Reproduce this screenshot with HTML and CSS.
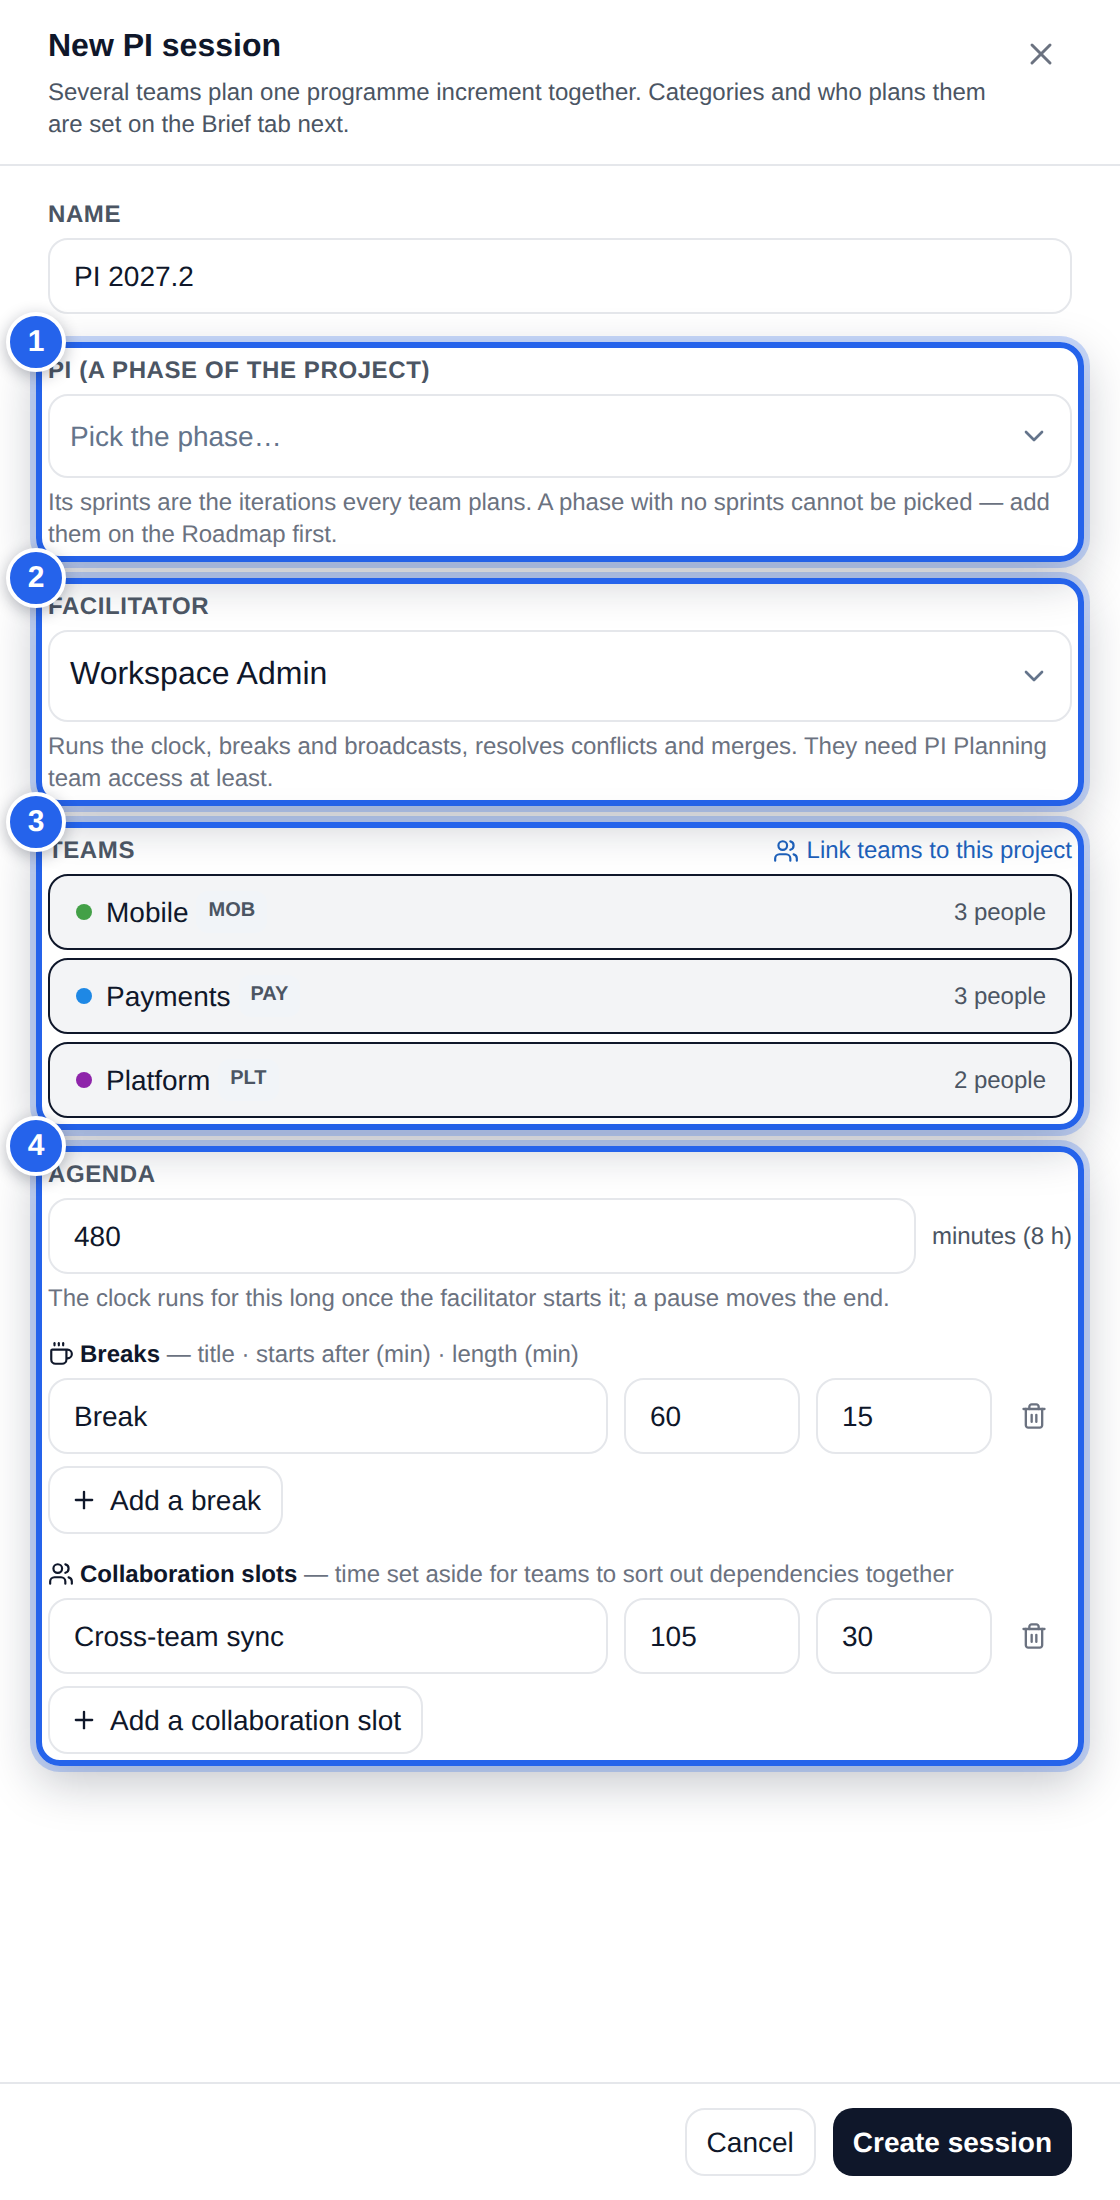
FILE: index.html
```html
<!DOCTYPE html>
<html lang="en">
<head>
<meta charset="utf-8">
<title>New PI session</title>
<link rel="stylesheet" href="styles.css">
</head>
<body>
<div class="modal">
  <header class="head">
    <div class="head-text">
      <h1 class="title">New PI session</h1>
      <p class="sub">Several teams plan one programme increment together. Categories and who plans them are set on the Brief tab next.</p>
    </div>
    <button class="close" aria-label="Close">
      <svg class="ic36" viewBox="0 0 24 24"><path d="M18 6 6 18"/><path d="m6 6 12 12"/></svg>
    </button>
  </header>

  <main class="body">
    <div class="field">
      <label class="label">Name</label>
      <input class="input" value="PI 2027.2">
    </div>

    <section class="spot">
      <span class="num">1</span>
      <label class="label">PI (a phase of the project)</label>
      <div class="select sm"><span class="placeholder">Pick the phase…</span>
        <svg class="ic32 chev" viewBox="0 0 24 24"><path d="m6 9 6 6 6-6"/></svg></div>
      <p class="hint">Its sprints are the iterations every team plans. A phase with no sprints cannot be picked — add them on the Roadmap first.</p>
    </section>

    <section class="spot">
      <span class="num">2</span>
      <label class="label">Facilitator</label>
      <div class="select lg"><span class="select-value">Workspace Admin</span>
        <svg class="ic32 chev" viewBox="0 0 24 24"><path d="m6 9 6 6 6-6"/></svg></div>
      <p class="hint">Runs the clock, breaks and broadcasts, resolves conflicts and merges. They need PI Planning team access at least.</p>
    </section>

    <section class="spot">
      <span class="num">3</span>
      <div class="label-row">
        <label class="label">Teams</label>
        <a class="link">
          <svg class="ic26" viewBox="0 0 24 24"><path d="M16 21v-2a4 4 0 0 0-4-4H6a4 4 0 0 0-4 4v2"/><circle cx="9" cy="7" r="4"/><path d="M22 21v-2a4 4 0 0 0-3-3.87"/><path d="M16 3.13a4 4 0 0 1 0 7.75"/></svg>
          Link teams to this project</a>
      </div>
      <div class="teams">
        <div class="team"><i class="dot green"></i><span class="team-name">Mobile</span><span class="code">MOB</span><span class="people">3 people</span></div>
        <div class="team"><i class="dot blue"></i><span class="team-name">Payments</span><span class="code">PAY</span><span class="people">3 people</span></div>
        <div class="team"><i class="dot purple"></i><span class="team-name">Platform</span><span class="code">PLT</span><span class="people">2 people</span></div>
      </div>
    </section>

    <section class="spot">
      <span class="num">4</span>
      <label class="label">Agenda</label>
      <div class="agenda-row">
        <input class="input grow" value="480">
        <span class="unit">minutes (8 h)</span>
      </div>
      <p class="hint">The clock runs for this long once the facilitator starts it; a pause moves the end.</p>

      <div class="sub-label">
        <svg class="ic26 dark" viewBox="0 0 24 24"><path d="M10 2v2"/><path d="M14 2v2"/><path d="M16 8a1 1 0 0 1 1 1v8a4 4 0 0 1-4 4H7a4 4 0 0 1-4-4V9a1 1 0 0 1 1-1h14a4 4 0 1 1 0 8h-1"/><path d="M6 2v2"/></svg>
        <span><b>Breaks</b> — title · starts after (min) · length (min)</span>
      </div>
      <div class="slot">
        <input class="input" value="Break"><input class="input" value="60"><input class="input" value="15">
        <button class="trash" aria-label="Remove"><svg class="ic28" viewBox="0 0 24 24"><path d="M3 6h18"/><path d="M19 6v14c0 1-1 2-2 2H7c-1 0-2-1-2-2V6"/><path d="M8 6V4c0-1 1-2 2-2h4c1 0 2 1 2 2v2"/><line x1="10" x2="10" y1="11" y2="17"/><line x1="14" x2="14" y1="11" y2="17"/></svg></button>
      </div>
      <button class="btn add"><svg class="ic28" viewBox="0 0 24 24"><path d="M5 12h14"/><path d="M12 5v14"/></svg><span>Add a break</span></button>

      <div class="sub-label">
        <svg class="ic26 dark" viewBox="0 0 24 24"><path d="M16 21v-2a4 4 0 0 0-4-4H6a4 4 0 0 0-4 4v2"/><circle cx="9" cy="7" r="4"/><path d="M22 21v-2a4 4 0 0 0-3-3.87"/><path d="M16 3.13a4 4 0 0 1 0 7.75"/></svg>
        <span><b>Collaboration slots</b> — time set aside for teams to sort out dependencies together</span>
      </div>
      <div class="slot">
        <input class="input" value="Cross-team sync"><input class="input" value="105"><input class="input" value="30">
        <button class="trash" aria-label="Remove"><svg class="ic28" viewBox="0 0 24 24"><path d="M3 6h18"/><path d="M19 6v14c0 1-1 2-2 2H7c-1 0-2-1-2-2V6"/><path d="M8 6V4c0-1 1-2 2-2h4c1 0 2 1 2 2v2"/><line x1="10" x2="10" y1="11" y2="17"/><line x1="14" x2="14" y1="11" y2="17"/></svg></button>
      </div>
      <button class="btn add"><svg class="ic28" viewBox="0 0 24 24"><path d="M5 12h14"/><path d="M12 5v14"/></svg><span>Add a collaboration slot</span></button>
    </section>
  </main>

  <footer class="foot">
    <button class="btn cancel">Cancel</button>
    <button class="btn primary">Create session</button>
  </footer>
</div>
</body>
</html>
```
FILE: styles.css
```css
* { box-sizing: border-box; }
html, body { margin: 0; padding: 0; background: #fff; }
body {
  font-family: "Liberation Sans", Arial, sans-serif;
  color: #0f172a;
  text-rendering: geometricPrecision;
}
svg { fill: none; stroke: currentColor; stroke-linecap: round; stroke-linejoin: round; stroke-width: 2; flex: none; display: block; }
.ic36 { width: 36px; height: 36px; }
.ic32 { width: 32px; height: 32px; }
.ic28 { width: 28px; height: 28px; }
.ic26 { width: 26px; height: 26px; }
.dark { color: #0f172a; }

.modal { width: 1120px; height: 2200px; display: flex; flex-direction: column; overflow: hidden; }

.head { display: flex; align-items: flex-start; justify-content: space-between; padding: 25px 48px 0; border-bottom: 2px solid #e5e7eb; height: 166px; }
.head-text { width: 960px; }
.title { margin: 0 0 12px; font-size: 32px; line-height: 40px; font-weight: 700; }
.sub { margin: 0; font-size: 24px; line-height: 32px; color: #4b5563; }
.close { border: 0; background: none; padding: 0; color: #6b7280; margin: 11px 13px 0 0; }

.body { flex: 1; padding: 32px 48px; display: flex; flex-direction: column; gap: 40px; }

.label { display: block; font-size: 24px; line-height: 31px; padding-top: 1px; font-weight: 700; text-transform: uppercase; letter-spacing: .6px; color: #4b5563; margin-bottom: 8px; }
.input { display: block; width: 100%; height: 76px; padding: 2px 24px 0; border: 2px solid #e5e7eb; border-radius: 20px; background: #fff; font: 28px "Liberation Sans", Arial, sans-serif; color: #0f172a; outline: 0; text-rendering: geometricPrecision; }

.spot { position: relative; }
.spot::after { content: ""; position: absolute; inset: -12px; border: 6px solid #2563eb; border-radius: 24px; box-shadow: 0 0 0 6px rgba(37, 99, 235, .25), 0 16px 48px rgba(15, 23, 42, .25); pointer-events: none; }
.num { position: absolute; left: -42px; top: -42px; z-index: 2; width: 60px; height: 60px; border-radius: 50%; background: #2563eb; border: 4px solid #fff; color: #fff; font-size: 30px; font-weight: 700; display: flex; align-items: center; justify-content: center; box-shadow: 0 4px 16px rgba(15, 23, 42, .3); }

.select { display: flex; align-items: center; justify-content: space-between; border: 2px solid #e5e7eb; border-radius: 20px; padding: 0 20px; background: #fff; }
.select.sm { height: 84px; font-size: 28px; }
.select.lg { height: 92px; font-size: 32px; }
.placeholder { color: #64748b; padding-top: 2px; }
.select-value { padding-bottom: 6px; }
.chev { color: #64748b; }
.hint { margin: 9px 0 -1px; font-size: 24px; line-height: 32px; color: #6b7280; }

.label-row { display: flex; justify-content: space-between; align-items: flex-start; }
.link { display: flex; align-items: center; gap: 8px; height: 32px; padding-top: 2px; font-size: 24px; color: #1d5fb8; }
.teams { display: flex; flex-direction: column; gap: 8px; }
.team { display: flex; align-items: center; height: 76px; padding: 0 24px 0 26px; background: #f3f4f6; border: 2px solid #0f172a; border-radius: 20px; font-size: 28px; }
.dot { width: 16px; height: 16px; border-radius: 50%; margin-right: 14px; }
.green { background: #43a047; }
.blue { background: #1e88e5; }
.purple { background: #8e24aa; }
.team-name { padding-top: 2px; }
.code { margin-left: 8px; padding: 0 12px 4px; font-size: 20px; font-weight: 700; line-height: 38px; color: #4b5563; background: #f1f4f8; border-radius: 12px; }
.people { margin-left: auto; padding-top: 2px; font-size: 24px; color: #4b5563; }

.agenda-row { display: flex; align-items: center; gap: 16px; }
.grow { flex: 1; width: auto; min-width: 0; }
.unit { font-size: 24px; padding-top: 2px; color: #4b5563; white-space: nowrap; }

.sub-label { display: flex; align-items: center; gap: 6px; margin: 24px 0 8px; font-size: 24px; line-height: 32px; color: #6b7280; }
.sub-label span { padding-top: 2px; height: 32px; line-height: 30px; }
.sub-label b { color: #0f172a; }
.slot { display: grid; grid-template-columns: 560px 176px 176px 52px; gap: 16px; align-items: center; }
.trash { border: 0; background: none; padding: 0 12px; color: #6b7280; }

.btn { height: 68px; display: inline-flex; align-items: center; border: 2px solid #e5e7eb; border-radius: 20px; background: #fff; padding: 2px 20px 0; font: 28px "Liberation Sans", Arial, sans-serif; color: #0f172a; text-rendering: geometricPrecision; }
.add { margin-top: 12px; display: flex; width: fit-content; gap: 12px; }
.add svg { margin-top: -2px; }
.foot { height: 118px; border-top: 2px solid #e5e7eb; padding: 24px 48px; display: flex; justify-content: flex-end; gap: 17px; flex: none; }
.primary { background: #0f172a; border: 0; color: #fff; font-weight: 700; }
```
